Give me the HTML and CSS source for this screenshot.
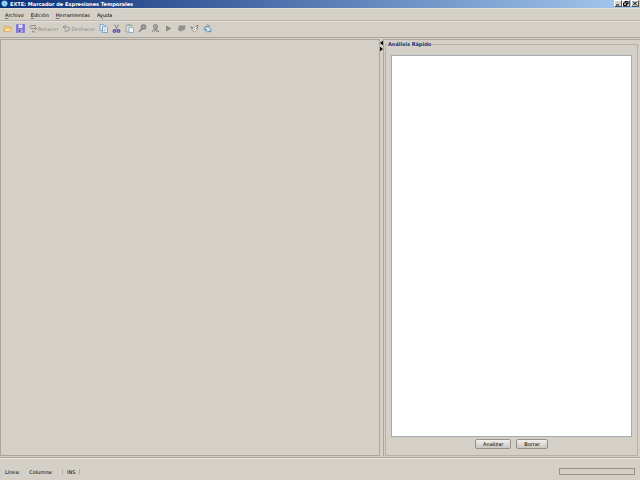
FILE: index.html
```html
<!DOCTYPE html>
<html lang="es">
<head>
<meta charset="utf-8">
<title>EXTE: Marcador de Expresiones Temporales</title>
<link rel="stylesheet" href="styles.css">
</head>
<body>
<header class="titlebar">
  <svg class="logo" viewBox="0 0 16 16"><circle cx="8" cy="8" r="7" fill="#58b8e8"/><path d="M3 5h10M2 9h12M5 13h6" stroke="#d8f4ff" stroke-width="2"/><path d="M8 3v10" stroke="#3a98d0" stroke-width="1"/></svg>
  <h1>EXTE: Marcador de Expresiones Temporales</h1>
  <div class="window-buttons">
    <button aria-label="Minimizar"><svg viewBox="0 0 6 5"><path d="M1 4h3" stroke="#000"/></svg></button>
    <button aria-label="Restaurar"><svg viewBox="0 0 6 5"><path d="M2 1.500V.5h3v2.500H4M.5 2h3v2.500h-3z" stroke="#000" fill="none"/></svg></button>
    <button aria-label="Cerrar" class="close"><svg viewBox="0 0 6 5"><path d="M1 .5l4 4M5 .5l-4 4" stroke="#000"/></svg></button>
  </div>
</header>
<nav class="menubar">
  <button><u>A</u>rchivo</button>
  <button><u>E</u>dición</button>
  <button><u>H</u>erramientas</button>
  <button>A<u>y</u>uda</button>
</nav>
<div class="toolbar" role="toolbar">
  <button aria-label="Abrir"><svg viewBox="0 0 18 18"><path d="M2 15V4h5l2 2h6v3" fill="#f8d89a" stroke="#d99a48" stroke-width="1.500"/><path d="M2 15l3-7h12l-3 7z" fill="#ffe6ad" stroke="#e0a050" stroke-width="1.500"/></svg></button>
  <button aria-label="Guardar"><svg viewBox="0 0 18 18"><path d="M1 1h16v16H1z" fill="#7c74dc" stroke="#5f58c0"/><path d="M5 1h8v7H5z" fill="#dcdcfa"/><path d="M5 11h8v6H5z" fill="#b8b4f0"/><path d="M6 12h3v4H6z" fill="#453fa6"/></svg></button>
  <button class="labelled" disabled><svg viewBox="0 0 18 18"><path d="M14 3H6Q2 3 2 6t4 3h9M11 5l4 4-4 4M7 13v3h5" fill="none" stroke="#929089" stroke-width="2"/></svg>Rehacer</button>
  <button class="labelled" disabled><svg viewBox="0 0 18 18"><path d="M7 2L2 6l5 4M2 6h8q5 0 5 4t-5 4H5" fill="none" stroke="#929089" stroke-width="2"/></svg>Deshacer</button>
  <button aria-label="Copiar"><svg viewBox="0 0 18 18"><path d="M2 1h8l3 3v9H2z" fill="#dceaf4" stroke="#719abb" stroke-width="1.500"/><path d="M7 5h7l3 3v9H7z" fill="#eff8ff" stroke="#6393b9" stroke-width="1.500"/><path d="M9 9h5M9 12h6M9 14h5" stroke="#86aecb"/></svg></button>
  <button aria-label="Cortar"><svg viewBox="0 0 18 18"><path d="M5 1l5 10M13 1L8 11" stroke="#85838a" stroke-width="2"/><circle cx="5" cy="14" r="2.500" fill="none" stroke="#625ba8" stroke-width="3"/><circle cx="13" cy="14" r="2.500" fill="none" stroke="#625ba8" stroke-width="3"/></svg></button>
  <button aria-label="Pegar"><svg viewBox="0 0 18 18"><path d="M2 2h12v14H2z" fill="#d8dfd7" stroke="#8c9f9c" stroke-width="1.500"/><path d="M5 1h6v3H5z" fill="#97a79d"/><path d="M8 7h6l3 3v7H8z" fill="#f1faff" stroke="#70a3bd" stroke-width="1.500"/></svg></button>
  <button aria-label="Buscar" disabled><svg viewBox="0 0 18 18"><circle cx="11" cy="6" r="4" fill="#aaa8a2" stroke="#85837e" stroke-width="3"/><path d="M8 9l-6 7" stroke="#85837e" stroke-width="3"/></svg></button>
  <button aria-label="Reemplazar" disabled><svg viewBox="0 0 18 18"><circle cx="9" cy="5" r="4" fill="#aaa8a2" stroke="#85837e" stroke-width="2"/><path d="M7 9l-5 7M10 9l6 7M7 15l2-5 3 6" fill="none" stroke="#85837e" stroke-width="2"/></svg></button>
  <button aria-label="Ejecutar" disabled><svg viewBox="0 0 18 18"><path d="M4 3l11 6-11 6z" fill="#8b8983"/></svg></button>
  <button aria-label="Marcar" disabled><svg viewBox="0 0 18 18"><path d="M4 3h13l-2 9-5 1-3 4v-4H2z" fill="#8b8983"/><path d="M6 6h8M5 9h8" stroke="#aaa8a2"/></svg></button>
  <button aria-label="Validar"><svg viewBox="0 0 18 18"><path d="M3 7l4 1 5-4 4 4-3 6-4 2-5-4z" fill="#eceae6" stroke="#999791" stroke-width="1.500"/><path d="M1 6l5 3M7 13l2-2M12 10l3-3" stroke="#67655f" stroke-width="2"/><path d="M13 3h3v3" fill="none" stroke="#8c7777" stroke-width="2"/></svg></button>
  <button aria-label="Actualizar"><svg viewBox="0 0 18 18"><path d="M5 6h9v10H5z" fill="#d7eaf3" stroke="#7895a5"/><path d="M2 9q1-6 9-5M9 1l4 3-4 4M1 11h6v4M16 9v6H9" fill="none" stroke="#6599b3" stroke-width="2"/></svg></button>
</div>
<main class="workspace">
  <section class="document" aria-label="Documento"></section>
  <div class="divider">
    <button aria-label="Contraer a la izquierda"><svg viewBox="0 0 4 6"><path d="M4 0v6L0 3z"/></svg></button>
    <button aria-label="Contraer a la derecha"><svg viewBox="0 0 4 6"><path d="M0 0v6l4-3z"/></svg></button>
  </div>
  <section class="side">
    <fieldset class="quick">
      <legend><label for="quick-text">Análisis Rápido</label></legend>
      <textarea id="quick-text"></textarea>
      <div class="actions"><button>Analizar</button><button>Borrar</button></div>
    </fieldset>
  </section>
</main>
<footer class="status">
  <span class="line">Línea:</span>
  <span class="column">Columna:</span>
  <span class="mode">INS</span>
  <div class="progress" role="progressbar" aria-label="Progreso"></div>
</footer>
</body>
</html>
```
FILE: styles.css
```css
* { box-sizing: border-box; }
body {
  margin: 0;
  height: 100vh;
  display: grid;
  grid-template-rows: 9px 12px 17px minmax(0, 1fr) 22px;
  background: #d4d0c8;
  color: #000;
  font: 5px/8px "DejaVu Sans", sans-serif;
  overflow: hidden;
}
button {
  margin: 0;
  padding: 0;
  border: 0;
  background: none;
  color: inherit;
  font: inherit;
}
svg { display: block; }
.titlebar {
  display: flex;
  align-items: center;
  gap: 2px;
  padding: 0 1px 1px;
  background: linear-gradient(90deg, #0c2f78, #a6caf0);
  border-bottom: 1px solid #e0ded9;
  color: #fff;
}
.logo { width: 7px; height: 7px; }
h1 { margin: 0; font-size: 5px; line-height: 8px; font-weight: bold; }
.window-buttons { display: flex; margin-left: auto; }
.window-buttons button {
  width: 8px;
  height: 7px;
  background: #d4d0c8;
  border: 1px solid;
  border-color: #fff #55534f #55534f #fff;
}
.window-buttons svg { width: 6px; height: 5px; }
.window-buttons .close { margin-left: 1px; }
.menubar {
  display: flex;
  align-items: center;
  gap: 7px;
  padding: 0 5px;
  border-bottom: 1px solid #bab6ae;
}
.menubar u { text-underline-offset: 1px; text-decoration-thickness: 1px; text-decoration-color: #777; }
.toolbar {
  display: flex;
  align-items: center;
  gap: 4px;
  padding: 0 3px 2px;
  border-top: 1px solid #e2dfda;
  border-bottom: 1px solid #aaa69e;
}
.toolbar svg { width: 9px; height: 9px; }
.labelled { display: flex; align-items: center; color: #8a8780; }
.workspace {
  display: grid;
  grid-template-columns: minmax(0, 1fr) 4px 40%;
  padding: 1px 0;
  border-bottom: 1px solid #aaa69e;
}
.document { border: 1px solid #aaa69e; }
.divider {
  display: flex;
  flex-direction: column;
  align-items: center;
  padding-top: 1px;
  border-right: 1px solid #aaa69e;
}
.divider svg { width: 3px; height: 6px; }
.side { display: grid; padding: 0 2px 0 1px; border-top: 1px solid #aaa69e; }
.quick {
  display: flex;
  flex-direction: column;
  min-width: 0;
  margin: 0;
  padding: 7px 5px 6px;
  border: 1px solid #b5b1a9;
}
.quick legend {
  margin-left: -4px;
  padding: 0 1px;
  color: #16326f;
  font-weight: bold;
  line-height: 8px;
}
.quick textarea {
  flex: 1;
  min-height: 0;
  margin: 0;
  padding: 2px;
  border: 1px solid #a5aaae;
  background: #fff;
  resize: none;
  outline: 0;
  font: inherit;
}
.actions { display: flex; justify-content: center; gap: 5px; padding-top: 2px; }
.actions button {
  height: 10px;
  padding: 0 7px;
  border: 1px solid #96928b;
  border-radius: 2px;
  background: linear-gradient(#f2f0ed, #c9c5bd);
}
.status {
  display: flex;
  align-items: center;
  padding: 4px 5px 0;
  border-top: 1px solid #e9e6e1;
}
.column { margin-left: 9px; }
.mode { margin-left: 9px; padding: 0 4px; border: solid #b5b1a9; border-width: 0 1px; line-height: 6px; }
.progress { width: 76px; height: 7px; margin-left: auto; border: 1px solid #96928b; }
```
